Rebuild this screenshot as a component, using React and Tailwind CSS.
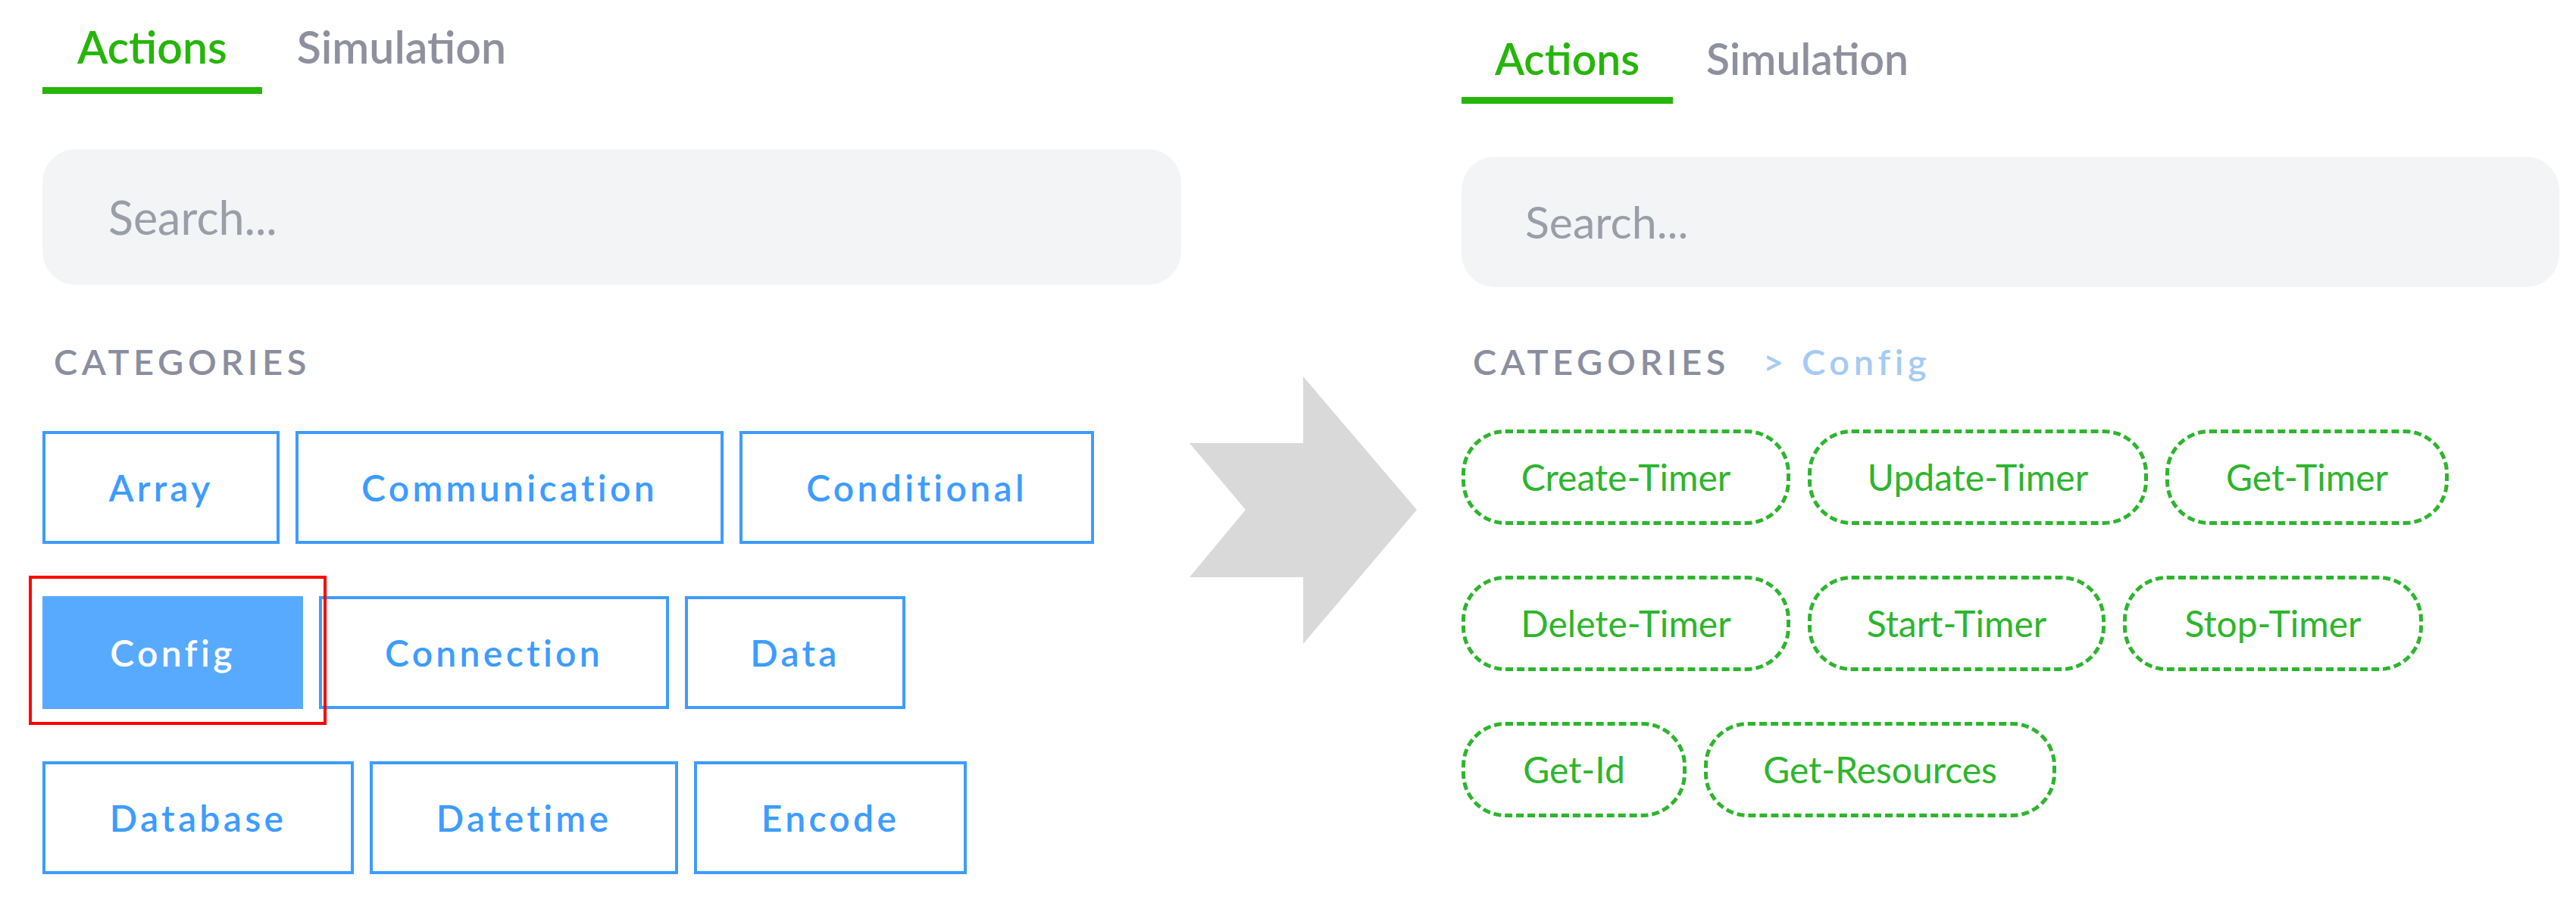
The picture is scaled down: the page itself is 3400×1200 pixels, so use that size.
import { ChevronRight } from "lucide-react";

const categories = [
  { label: "Array", w: "w-[313px]" },
  { label: "Communication", w: "w-[565px]" },
  { label: "Conditional", w: "w-[468px]" },
  { label: "Config", w: "w-[344px]", active: true },
  { label: "Connection", w: "w-[462px]" },
  { label: "Data", w: "w-[291px]" },
  { label: "Database", w: "w-[411px]" },
  { label: "Datetime", w: "w-[407px]" },
  { label: "Encode", w: "w-[360px]" },
];

const actions = [
  { label: "Create-Timer", w: "w-[434px]" },
  { label: "Update-Timer", w: "w-[449px]" },
  { label: "Get-Timer", w: "w-[374px]" },
  { label: "Delete-Timer", w: "w-[434px]" },
  { label: "Start-Timer", w: "w-[393px]" },
  { label: "Stop-Timer", w: "w-[396px]" },
  { label: "Get-Id", w: "w-[297px]" },
  { label: "Get-Resources", w: "w-[465px]" },
];

function CategoryButton({ item }) {
  const base =
    "h-[149px] flex items-center justify-center text-[48px] font-semibold tracking-[0.09em] leading-none";

  if (item.active) {
    return (
      <div className={`relative ${item.w}`}>
        <div className={`${base} w-full bg-[#58aaff] text-white`}>
          {item.label}
        </div>
        {/* annotation box */}
        <div className="absolute -left-[18px] -right-[31px] -top-[27px] -bottom-[21px] border-4 border-[#ff0000] pointer-events-none" />
      </div>
    );
  }

  return (
    <div className={`${base} ${item.w} border-4 border-[#3d9cff] text-[#3d9cff]`}>
      {item.label}
    </div>
  );
}

function ActionPill({ item }) {
  return (
    <div
      className={`${item.w} h-[126px] flex items-center justify-center rounded-[58px] border-[5px] border-dashed border-[#2db52d] text-[48px] leading-none text-[#2db52d]`}
    >
      {item.label}
    </div>
  );
}

function Tabs({ top, size, pb, px }) {
  return (
    <div className={`flex ${top}`}>
      <div className={`${px} ${pb} border-b-[9px] border-[#26b50a] text-[#26b50a] ${size} font-semibold leading-none`}>
        Actions
      </div>
      <div className={`${px} ${pb} text-[#8e909e] ${size} font-semibold leading-none`}>
        Simulation
      </div>
    </div>
  );
}

export default function App() {
  return (
    <div
      className="flex items-start bg-white w-[3400px] h-[1200px] overflow-hidden"
      style={{ fontFamily: "Lato, 'Open Sans', sans-serif" }}
    >
      {/* before */}
      <div className="ml-[56px] w-[1503px] flex flex-col">
        <Tabs top="pt-[32px]" size="text-[59px]" pb="pb-[24px]" px="px-[46px]" />

        <div className="mt-[73px] h-[179px] rounded-[44px] bg-[#f3f4f6] flex items-center pl-[87px] text-[61px] text-[#9a9ea8]">
          Search...
        </div>

        <div className="mt-[78px] pl-[15px] text-[47px] leading-none tracking-[0.12em] text-[#8b8e9f] font-semibold">
          CATEGORIES
        </div>

        <div className="mt-[68px] flex flex-wrap gap-x-[21px] gap-y-[69px]">
          {categories.map((c) => (
            <CategoryButton key={c.label} item={c} />
          ))}
        </div>
      </div>

      {/* arrow */}
      <svg
        className="ml-[11px] mt-[497px] shrink-0"
        width="300"
        height="353"
        viewBox="0 0 300 353"
      >
        <polygon
          points="0,88 150,88 150,0 300,176 150,353 150,265 0,265 74,176"
          fill="#d9d9d9"
        />
      </svg>

      {/* after */}
      <div className="ml-[59px] w-[1449px] flex flex-col">
        <Tabs top="pt-[49px]" size="text-[57px]" pb="pb-[22px]" px="px-[44px]" />

        <div className="mt-[70px] h-[172px] rounded-[44px] bg-[#f3f4f6] flex items-center pl-[84px] text-[59px] text-[#9a9ea8]">
          Search...
        </div>

        <div className="mt-[75px] pl-[15px] flex items-center text-[47px] leading-none tracking-[0.12em] font-semibold">
          <span className="text-[#8b8e9f]">CATEGORIES</span>
          <span className="ml-[44px] text-[#a5cbf4]">&gt;</span>
          <span className="ml-[18px] text-[#a5cbf4]">Config</span>
        </div>

        <div className="mt-[66px] flex flex-wrap gap-x-[23px] gap-y-[67px]">
          {actions.map((a) => (
            <ActionPill key={a.label} item={a} />
          ))}
        </div>
      </div>
    </div>
  );
}
